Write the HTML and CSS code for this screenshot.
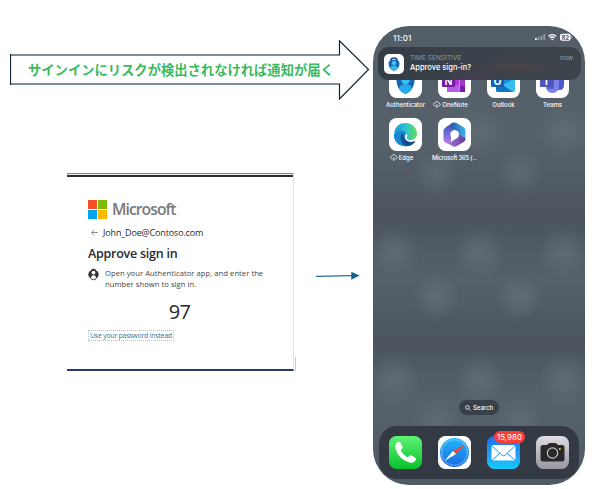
FILE: index.html
```
<!DOCTYPE html>
<html lang="ja">
<head>
<meta charset="utf-8">
<title>Authenticator sign-in</title>
<link rel="stylesheet" href="styles.css">
</head>
<body>
<main class="diagram">
  <section class="flow">
    <div class="callout">
      <svg class="callout-shape" viewBox="0 0 360 60" fill="none" stroke-linejoin="miter">
        <path d="M1 15H330M1 44H330" stroke="#7d8d97" stroke-width="2"/>
        <path d="M.5 14V45M329.5 15V.8L358.5 29.5L329.5 59V44" stroke="#0b2634" stroke-width="1.2"/>
      </svg>
      <p class="callout-text">サインインにリスクが検出されなければ通知が届く</p>
    </div>
    <div class="step">
      <article class="card">
        <div class="brand">
          <svg width="19" height="19" viewBox="0 0 19 19"><path fill="#f25022" d="M0 0h9v9H0z"/><path fill="#7fba00" d="M10 0h9v9h-9z"/><path fill="#00a4ef" d="M0 10h9v9H0z"/><path fill="#ffb900" d="M10 10h9v9h-9z"/></svg>
          <span>Microsoft</span>
        </div>
        <div class="account">
          <svg width="7" height="7" viewBox="0 0 7 7" fill="none" stroke="#777" stroke-width=".8"><path d="M7 3.5H.7M3.3 .8L.6 3.5L3.3 6.2"/></svg>
          <span>John_Doe@Contoso.com</span>
        </div>
        <h1>Approve sign in</h1>
        <div class="instruction">
          <svg width="11" height="13" viewBox="0 0 11 13"><ellipse cx="5.5" cy="6.500" rx="5.200" ry="4.600" fill="#333"/><path d="M2.700 5V3.500a2.800 2.800 0 0 1 5.600 0V9.500q0 2.600-2.800 2.800-2.800-.2-2.800-2.800z" fill="#333"/><circle cx="5.500" cy="4.600" r="1.900" fill="#fff"/><path d="M3 9.500q0-2.300 2.500-2.300t2.500 2.300q-.7 1.900-2.500 1.900t-2.500-1.900" fill="#fff"/></svg>
          <p>Open your Authenticator app, and enter the<br>number shown to sign in.</p>
        </div>
        <div class="code">97</div>
        <a class="link">Use your password instead</a>
      </article>
      <i class="edge-mark"></i>
      <svg class="arrow" width="44" height="10" viewBox="0 0 44 10"><path d="M0 5.400L36 4.700" stroke="#1d7399" stroke-width="1.200"/><path d="M35.300 .8L43.500 4.600L35.300 8.800z" fill="#11628a"/></svg>
    </div>
  </section>

  <section class="phone">
    <header class="status">
      <span class="clock">11:01</span>
      <svg width="38" height="9" viewBox="0 0 38 9"><g fill="#fff"><rect y="5" width="1.8" height="2" rx=".5"/><g opacity=".4"><rect x="2.800" y="4" width="1.800" height="3" rx=".5"/><rect x="5.600" y="2.700" width="1.800" height="4.300" rx=".5"/><rect x="8.400" y="1.300" width="1.800" height="5.700" rx=".5"/></g><rect x="25" y=".8" width="10.600" height="7" rx="2"/><rect x="36.100" y="3" width="1" height="2.400" rx=".5" opacity=".5"/></g><g fill="none" stroke="#fff" stroke-width="1.300"><path d="M13.400 3.300q3.900-3.400 7.800 0M15 5q2.300-2 4.600 0"/></g><path d="M16 6.200q1.300-1 2.600 0L17.300 7.600z" fill="#fff"/><text class="battery" x="30.300" y="6.700">82</text></svg>
    </header>

    <div class="home">
      <div class="app"><span class="tile">
        <svg viewBox="0 0 33 33"><path d="M16.500 8c7 0 9 4 9 7.500 0 6-4 11.500-9 13.500-5-2-9-7.500-9-13.500C7.500 12 9.500 8 16.500 8" fill="#1267b5"/><circle cx="16.500" cy="15" r="4.300" fill="#35c1f1"/><path d="M10 24q1-5 6.500-5t6.500 5q-2.500 4-6.500 5-4-1-6.500-5" fill="#28a9ea"/></svg>
      </span><span class="label">Authenticator</span></div>
      <div class="app"><span class="tile">
        <svg viewBox="0 0 33 33"><path d="M9 5h18v22H9z" fill="#a83bd0"/><path d="M21 5h6v22h-6z" fill="#d177e8"/><path d="M22 15h5v6h-5z" fill="#a338c6"/><path d="M22 21h5v6h-5z" fill="#761bad"/><path d="M9 20h12v7H9z" fill="#b95be0"/><rect x="4" y="9" width="13" height="13" rx="1" fill="#7719aa"/><text class="glyph" x="10.500" y="19.500">N</text></svg>
      </span><span class="label"><svg class="cloud" viewBox="0 0 9 8"><path d="M3 5.500H2.100a1.600 1.600 0 0 1-.1-3.200A2.500 2.500 0 0 1 6.700 2.500a1.500 1.500 0 0 1 .1 3H6M4.500 3.500V7.300M3.300 6.200L4.500 7.400L5.700 6.200"/></svg>OneNote</span></div>
      <div class="app"><span class="tile">
        <svg viewBox="0 0 33 33"><path d="M11 5h14v15H11z" fill="#1490df"/><path d="M9 13l9 6 10-6v12q0 2-2 2H11q-2 0-2-2z" fill="#39bdf0"/><path d="M9 15l17 12H11q-2 0-2-2z" fill="#1474c4"/><rect x="4" y="9" width="13" height="13" rx="1" fill="#0f63b9"/><text class="glyph" x="10.500" y="19.500">O</text></svg>
      </span><span class="label">Outlook</span></div>
      <div class="app"><span class="tile">
        <svg viewBox="0 0 33 33"><path d="M20 14h8v6q0 5-4.500 5T19 20z" fill="#5059c9"/><path d="M10 13h13v8q0 7-6.500 7T10 21z" fill="#7b83eb"/><path d="M10 13h8v11h-7z" fill="#5961c5"/><rect x="4" y="9" width="13" height="13" rx="1" fill="#4b53bc"/><text class="glyph" x="10.500" y="19.500">T</text></svg>
      </span><span class="label">Teams</span></div>
      <div class="app"><span class="tile">
        <svg viewBox="0 0 33 33"><defs><linearGradient id="edgeTop"><stop offset="0" stop-color="#1694da"/><stop offset=".5" stop-color="#2dc4cf"/><stop offset="1" stop-color="#66dd58"/></linearGradient><linearGradient id="edgeLow" x2="0" y2="1"><stop offset="0" stop-color="#1687d3"/><stop offset="1" stop-color="#12539b"/></linearGradient></defs><path d="M5 16C4.500 23 10 28.200 16.500 28.200c4.500 0 8-2 10-5.400-7 3.500-12-.5-10.500-6.800z" fill="url(#edgeLow)"/><path d="M5 16C6 8 11 5 16.500 5 23 5 28 10 28 15.500c0 4-3 6.500-6.500 6.500-3 0-5-1-3.500-3 1-2-.5-5-4-5.500C10 13 6.500 14 5 16" fill="url(#edgeTop)"/><path d="M5 16.500C7 13 11 12 14 12.700c2.500.6 3.500 2 3.500 3.300-5 4-3 9 1 12-8 1-13.500-4-13.500-11.500" fill="#1689d3"/><path d="M14 14.500c-4.500 4-2.500 12 4 13.700 4 0 6.500-2.200 8.300-5C19 25.500 14 22 14 14.500" fill="#104f94"/></svg>
      </span><span class="label"><svg class="cloud" viewBox="0 0 9 8"><path d="M3 5.500H2.100a1.600 1.600 0 0 1-.1-3.200A2.500 2.500 0 0 1 6.700 2.500a1.500 1.500 0 0 1 .1 3H6M4.500 3.500V7.300M3.300 6.200L4.500 7.400L5.700 6.200"/></svg>Edge</span></div>
      <div class="app"><span class="tile">
        <svg viewBox="0 0 33 33"><defs><linearGradient id="mA" x2="0" y2="1"><stop offset="0" stop-color="#3a55b5"/><stop offset=".5" stop-color="#6b6ad6"/><stop offset="1" stop-color="#c07be8"/></linearGradient><linearGradient id="mB"><stop offset="0" stop-color="#2358a8"/><stop offset="1" stop-color="#42b5ee"/></linearGradient><linearGradient id="mC"><stop offset="0" stop-color="#b684ec"/><stop offset="1" stop-color="#5d3a96"/></linearGradient></defs><path d="M15 5Q5.500 9.500 5.500 12.500v8.500q0 3 4 4.500 3 .8 3.500-3v-8l6-4z" fill="url(#mA)"/><path d="M13 5.500q2-1.500 5-.7l8 4.700q1.500 1 1.500 3v9l-7-4v-3.500l-6-3.500q-2-1.200-1.500-5" fill="url(#mB)"/><path d="M6.500 23q4 2.500 7 .5l7-4.500v-2.500l7 4q.3 2-1.500 3.200L19 28q-2.500 1.300-5 0z" fill="url(#mC)"/><circle cx="16.500" cy="16.500" r="4.200" fill="#fff"/></svg>
      </span><span class="label narrow">Microsoft 365 (...</span></div>
    </div>

    <div class="search"><svg width="6" height="6" viewBox="0 0 6 6" fill="none" stroke="#fff" stroke-width=".8"><circle cx="2.400" cy="2.400" r="1.800"/><path d="M3.800 3.800L5.600 5.600"/></svg>Search</div>

    <footer class="dock">
      <span class="tile call"><svg viewBox="0 0 33 33"><path d="M8.500 6.200q1.800-1 3 .8l2 3.400q.8 1.400-.8 2.500-1.300.9-.7 2 2 3.500 5.900 6 1 .6 2-.6 1.200-1.500 2.600-.7l3.400 2q1.700 1 .8 2.700-2 3.300-6.400 2.300Q9 22.800 6.400 12.200q-.8-4.200 2.100-6" fill="#fff"/></svg></span>
      <span class="tile"><svg viewBox="0 0 33 33"><defs><linearGradient id="saf" x2="0" y2="1"><stop offset="0" stop-color="#20b9f8"/><stop offset="1" stop-color="#1b68e2"/></linearGradient></defs><circle cx="16.500" cy="16.500" r="14.500" fill="url(#saf)"/><circle cx="16.500" cy="16.500" r="12.700" fill="none" stroke="#a7dcfa" stroke-width="1.500" stroke-dasharray=".5 .83"/><path d="M27 8.500L14.900 14.900 18.100 18.100z" fill="#f6453f"/><path d="M6.500 25L14.900 14.900 18.100 18.100z" fill="#fff"/></svg></span>
      <span class="tile mail"><svg viewBox="0 0 33 33"><rect x="4.500" y="9" width="24" height="15.500" rx="2" fill="#fff"/><path d="M5.200 10l9.500 9q1.800 1.600 3.600 0l9.500-9M5.200 24l8-7M27.800 24l-8-7" fill="none" stroke="#2594ec" stroke-width="1"/></svg><b class="badge">15,980</b></span>
      <span class="tile camera"><svg viewBox="0 0 33 33"><path d="M7 9h4l1.500-1.500q.5-.5 1.500-.5h5q1 0 1.500.5L22 9h4q2.500 0 2.500 2.500V23q0 2.500-2.500 2.500H7Q4.500 25.500 4.500 23V11.500Q4.500 9 7 9" fill="#29292b"/><circle cx="16.500" cy="17" r="5.200" fill="none" stroke="#c4c3c7" stroke-width="1.200"/><circle cx="23.800" cy="13" r="1.100" fill="#f6ce18"/></svg></span>
    </footer>

    <div class="notification">
      <span class="notice-icon"><svg viewBox="0 0 20 20"><path d="M7 7V6q0-2 3-2t3 2v1" fill="none" stroke="#174e93" stroke-width="1.500"/><path d="M10 5.500q5.500 0 5.500 4.200 0 5-5.500 7.300-5.500-2.300-5.500-7.300 0-4.200 5.500-4.200" fill="#146bb9"/><circle cx="10" cy="9" r="2" fill="#50ccf5"/><path d="M6.500 14q0-2.500 3.500-2.500t3.500 2.500Q12 16.300 10 17q-2-.7-3.500-3" fill="#35b5ee"/></svg></span>
      <div class="notice-copy"><span class="kind">TIME SENSITIVE</span><strong>Approve sign-in?</strong></div>
      <span class="when">now</span>
    </div>
  </section>
</main>
</body>
</html>
```
FILE: styles.css
```
* { box-sizing: border-box; }
body { margin: 0; background: #fff; font-family: Inter, "Liberation Sans", sans-serif; }
p, h1 { margin: 0; }
svg { flex: none; }
.diagram { display: grid; grid-template-columns: 363px 212px; width: 603px; height: 489px; padding: 26px 0 4px 10px; overflow: hidden; }
.flow { padding-top: 14px; }
.callout { display: grid; width: 360px; height: 60px; }
.callout-shape, .callout-text { grid-area: 1 / 1; }
.callout-shape { width: 360px; height: 60px; }
.callout-text { padding-left: 18px; font: bold 13.3px/59px "Noto Sans CJK JP", sans-serif; color: #3bb95f; white-space: nowrap; }
.step { display: flex; align-items: flex-start; margin: 73px 0 0 57px; }
.card { width: 227px; height: 198px; padding: 23px 0 0 21px; border-top: 1px solid #7589aa; border-bottom: 2px solid #263b69; border-right: 1px solid #dcdfe3; box-shadow: inset 0 1px #e6e9ee, inset 0 3px #302c2a; font-family: "Open Sans", sans-serif; color: #292929; white-space: nowrap; }
.edge-mark { width: 1px; height: 14px; margin: 184px 0 0 1px; background: #c9c9c9; }
.brand { display: flex; align-items: center; gap: 5px; height: 24px; font-size: 15.7px; font-weight: 600; letter-spacing: -.95px; color: #7a7a7a; }
.account { display: flex; align-items: center; gap: 5px; height: 12px; margin: 5px 0 0 3px; font-size: 9px; letter-spacing: -.15px; }
.card h1 { margin-top: 6px; font-size: 12.5px; line-height: 19px; font-weight: 600; letter-spacing: -.25px; }
.instruction { display: flex; gap: 6px; height: 23px; margin-top: 5px; }
.instruction p { font-size: 7.6px; line-height: 10.7px; letter-spacing: .06px; color: #444; }
.code { width: 183px; height: 30px; margin-top: 6px; text-align: center; font-size: 20px; line-height: 30px; letter-spacing: -.7px; }
.link { display: inline-block; height: 9px; margin: 4px 0 0 1px; padding: 0 1px; outline: 1px dotted #9fc5d6; font-size: 7px; line-height: 9px; letter-spacing: -.26px; color: #287b9c; vertical-align: top; }
.arrow { margin: 98px 0 0 20px; }

.phone { position: relative; display: flex; flex-direction: column; width: 212px; height: 459px; padding: 0 6px 6px; border-radius: 36px; overflow: hidden; color: #fff; background:
  radial-gradient(circle at 10% 49.500%, #6b748099 0, #6b748066 10px, transparent 26px),
  radial-gradient(circle at 50% 49.500%, #6b748099 0, #6b748066 10px, transparent 26px),
  radial-gradient(circle at 90% 49.500%, #6b748099 0, #6b748066 10px, transparent 26px),
  radial-gradient(circle at 30% 59%, #6b748099 0, #6b748066 10px, transparent 24px),
  radial-gradient(circle at 69% 59%, #6b748099 0, #6b748066 10px, transparent 24px),
  radial-gradient(circle at 30% 32%, #6b748080 0, #6b748050 10px, transparent 24px),
  radial-gradient(circle at 69% 32%, #6b748080 0, #6b748050 10px, transparent 24px),
  radial-gradient(circle at 10% 77%, #6b748099 0, #6b748066 10px, transparent 26px),
  radial-gradient(circle at 50% 77%, #6b748099 0, #6b748066 10px, transparent 26px),
  radial-gradient(circle at 90% 77%, #6b748099 0, #6b748066 10px, transparent 26px),
  radial-gradient(circle at 50% 23%, #6b748080 0, #6b748050 10px, transparent 26px),
  radial-gradient(circle at 90% 23%, #6b748080 0, #6b748050 10px, transparent 26px),
  radial-gradient(circle at 30% 86%, #6b748080 0, #6b748050 10px, transparent 24px),
  radial-gradient(circle at 69% 86%, #6b748080 0, #6b748050 10px, transparent 24px),
  linear-gradient(#525d66 0, #56616b 24%, #4c555d 42%, #54606a 55%, #4c555d 69%, #55616b 82%, #4f5a63 100%); }
.status { display: flex; justify-content: space-between; align-items: center; height: 23px; padding: 0 6px 0 14px; }
.clock { font-size: 8px; font-weight: 500; letter-spacing: .2px; }
.battery { font: bold 6px Inter, sans-serif; fill: #525c65; text-anchor: middle; }
.home { display: grid; grid-template-columns: repeat(4, 33px); column-gap: 16px; grid-auto-rows: 53px; margin: 16px 0 0 10px; }
.app { display: flex; flex-direction: column; align-items: center; width: 33px; }
.tile { position: relative; flex: none; width: 33px; height: 33px; border-radius: 7.5px; background: #fff; }
.tile > svg { display: block; width: 33px; height: 33px; }
.glyph { font: bold 10px "Open Sans", sans-serif; fill: #fff; text-anchor: middle; }
.label { display: flex; align-items: center; gap: 1px; height: 12px; font-size: 6px; font-weight: 500; white-space: nowrap; }
.app:nth-child(2) .label, .app:nth-child(5) .label { margin-left: -8px; }
.narrow { letter-spacing: -.25px; }
.cloud { width: 8px; height: 7px; fill: none; stroke: #fff; stroke-width: .8; }
.search { display: flex; align-items: center; justify-content: center; gap: 2px; width: 40px; height: 15px; margin: auto auto 11px; border-radius: 8px; background: #384149; font-size: 6px; font-weight: 500; }
.dock { display: flex; gap: 16px; height: 53px; padding: 10px; border-radius: 18px; background: #333a43; }
.call { background: linear-gradient(#5ff477, #0abf2b); }
.mail { background: linear-gradient(#1d6ff2, #19c8fb); }
.camera { background: linear-gradient(#dfdce2, #99979f); }
.badge { position: absolute; left: 7px; top: -5px; width: 31px; height: 12px; border-radius: 6px; background: #fa4039; text-align: center; font-size: 8px; line-height: 12px; font-weight: 400; }
.notification { position: absolute; left: 5px; top: 21px; display: flex; align-items: center; width: 203px; height: 33px; padding: 0 8px 0 6px; border-radius: 11px; background: radial-gradient(ellipse at 47% 90%, #493d51 0, transparent 18%), radial-gradient(ellipse at 68% 60%, #4b4245 0, transparent 25%), linear-gradient(90deg, #343c44, #3b424b 50%, #3d444b); }
.notice-icon { width: 20px; height: 20px; border-radius: 5px; background: #fff; }
.notice-icon svg { display: block; width: 20px; height: 20px; }
.notice-copy { display: flex; flex-direction: column; margin: -2px 0 0 6px; font-size: 7.5px; line-height: 9px; white-space: nowrap; }
.kind { font-size: 6.5px; letter-spacing: .05px; color: #929aa2; }
.notice-copy strong { font-weight: 500; }
.when { margin: 0 0 11px auto; font-size: 6.5px; line-height: 9px; color: #9ba0a7; }
```
